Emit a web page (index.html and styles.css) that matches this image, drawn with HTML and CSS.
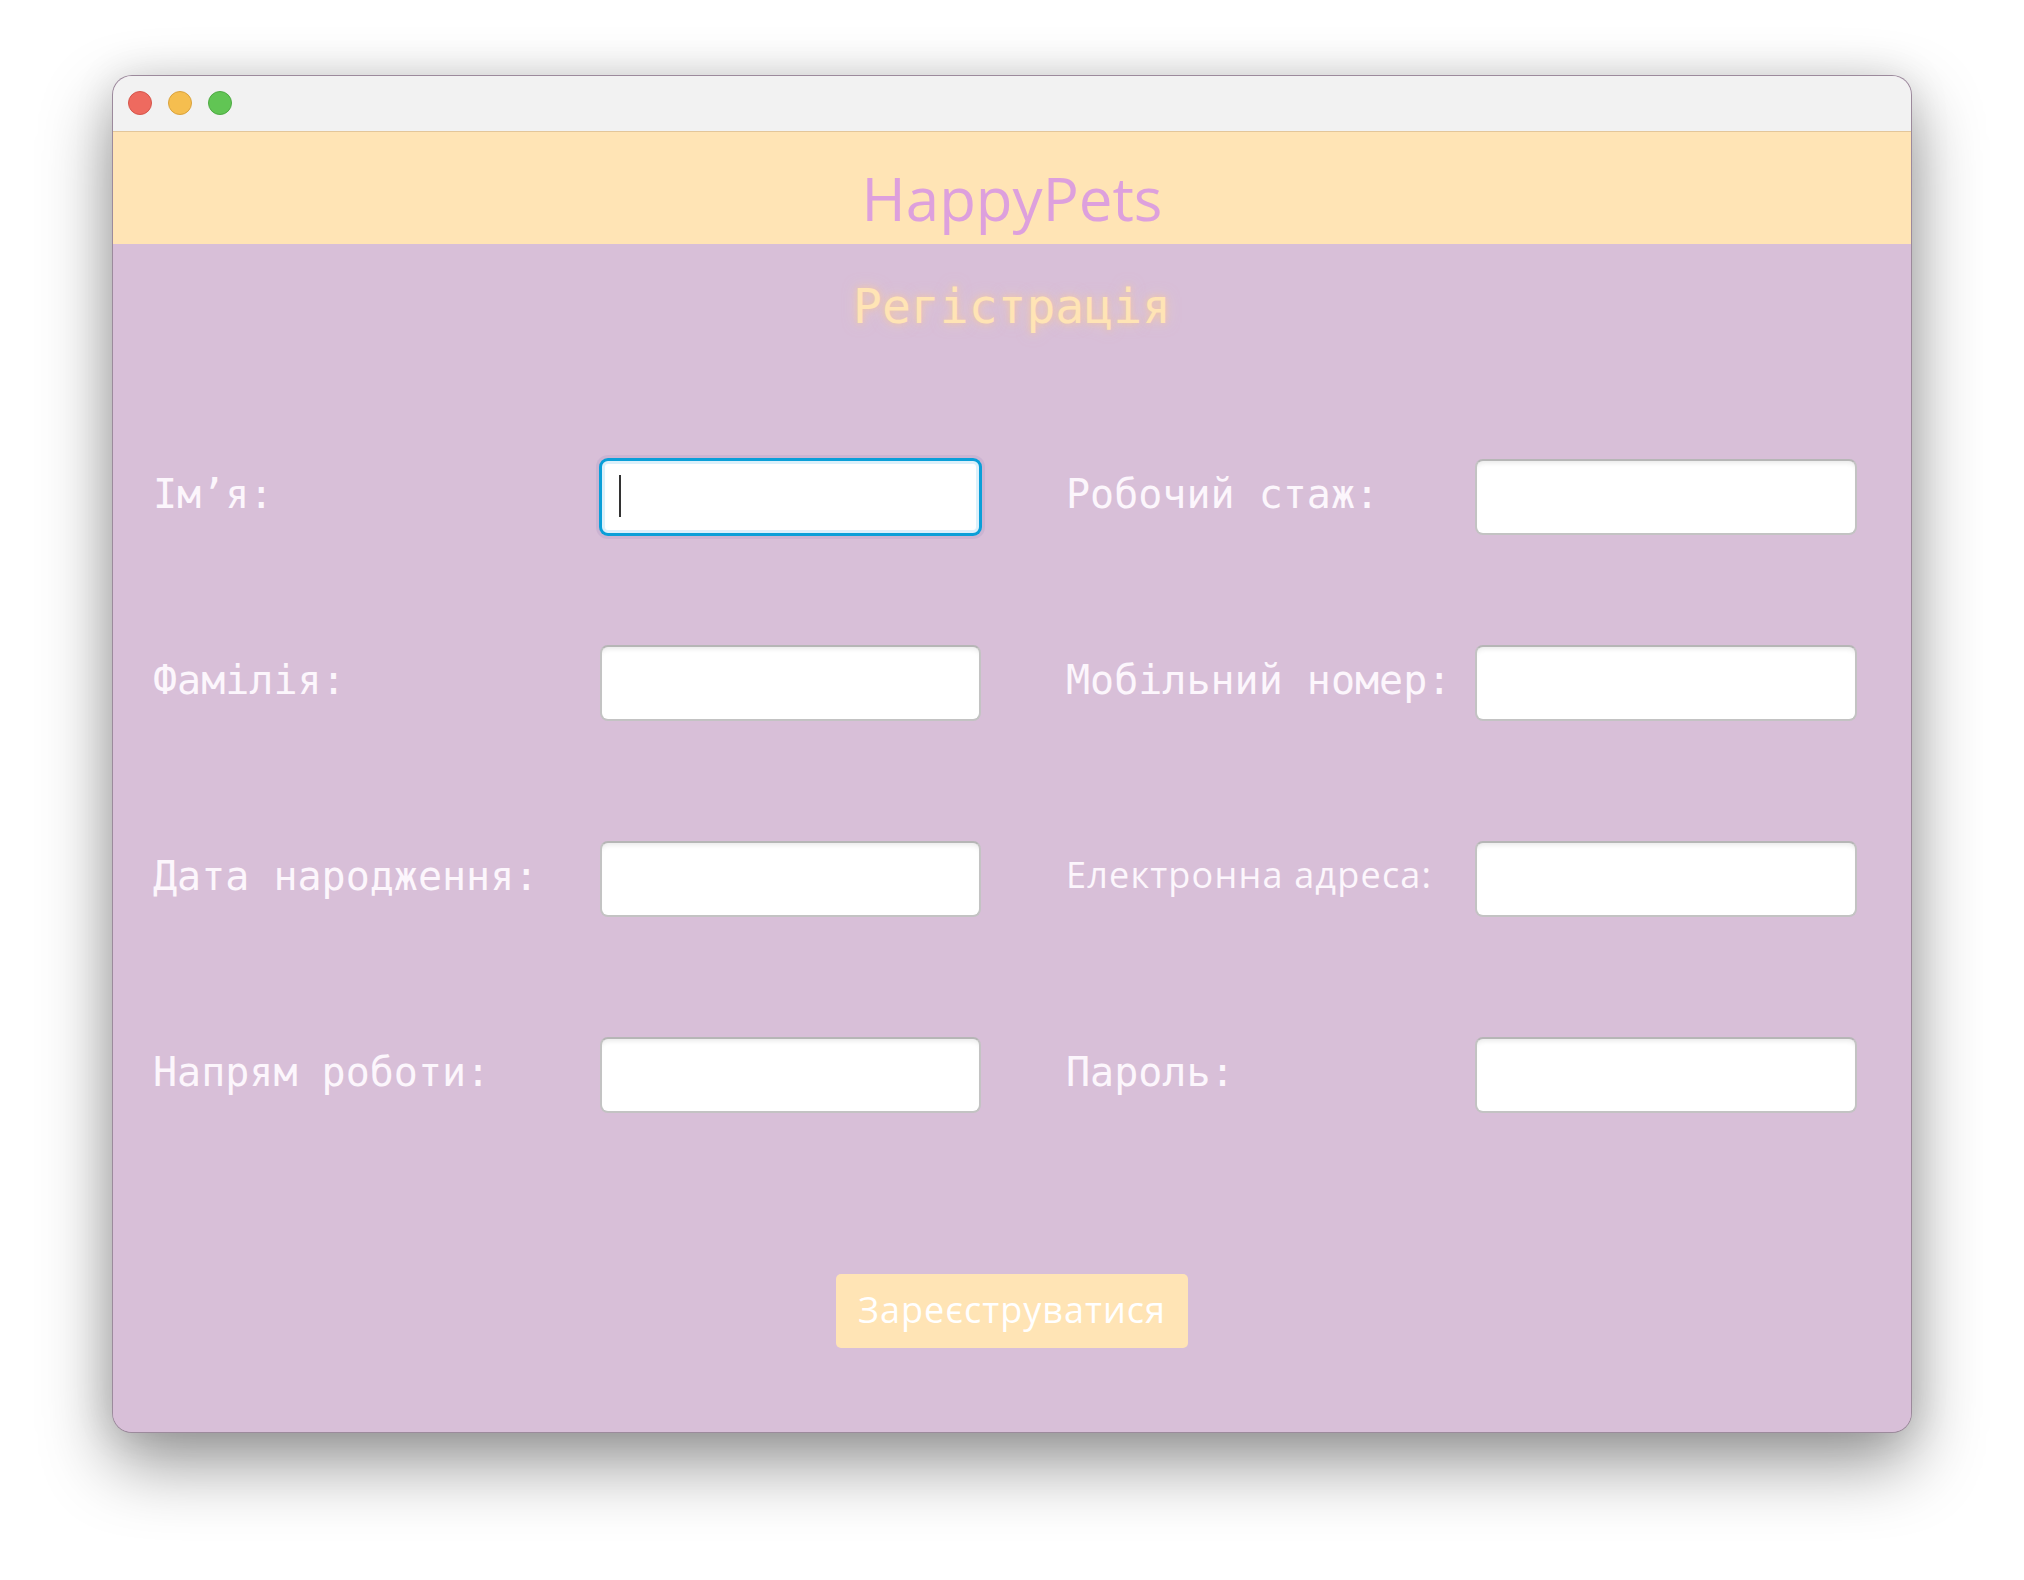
FILE: index.html
```html
<!DOCTYPE html>
<html lang="uk">
<head>
<meta charset="utf-8">
<title>HappyPets</title>
<link rel="stylesheet" href="styles.css">
</head>
<body>
<div class="window">
  <div class="titlebar">
    <span class="light light-red"></span>
    <span class="light light-yellow"></span>
    <span class="light light-green"></span>
  </div>
  <header class="app-header">HappyPets</header>
  <main class="app-body">
    <h1 class="page-title">Регістрація</h1>
    <div class="form">
      <div class="row">
        <label class="label">Ім’я:</label>
        <div class="field-wrap">
          <input class="field is-focused" type="text">
          <span class="caret"></span>
        </div>
        <label class="label label-right">Робочий стаж:</label>
        <input class="field" type="text">
      </div>
      <div class="row row-spaced-a">
        <label class="label">Фамілія:</label>
        <input class="field" type="text">
        <label class="label label-right">Мобільний номер:</label>
        <input class="field" type="text">
      </div>
      <div class="row row-spaced-b">
        <label class="label">Дата народження:</label>
        <input class="field" type="text">
        <label class="label label-right label-sans">Електронна адреса:</label>
        <input class="field" type="text">
      </div>
      <div class="row row-spaced-b">
        <label class="label">Напрям роботи:</label>
        <input class="field" type="text">
        <label class="label label-right">Пароль:</label>
        <input class="field" type="password">
      </div>
    </div>
    <div class="actions">
      <button class="submit" type="button">Зареєструватися</button>
    </div>
  </main>
</div>
</body>
</html>
```
FILE: styles.css
```css
html, body {
  margin: 0;
  padding: 0;
  background: #ffffff;
}

body {
  width: 2024px;
  height: 1580px;
  overflow: hidden;
}

.window {
  width: 1800px;
  margin: 75px auto 0;
  border-radius: 20px;
  overflow: hidden;
  box-sizing: border-box;
  border: 1px solid rgba(0, 0, 0, 0.28);
  box-shadow: 0 30px 70px rgba(0, 0, 0, 0.42), 0 0 40px rgba(0, 0, 0, 0.10);
  background: #d8bfd8;
}

.titlebar {
  height: 56px;
  background: #f2f2f2;
  border-bottom: 1px solid #e3c69a;
  display: flex;
  align-items: center;
  gap: 16px;
  padding-left: 15px;
  padding-bottom: 2px;
  box-sizing: border-box;
}

.light {
  width: 24px;
  height: 24px;
  border-radius: 50%;
  box-sizing: border-box;
}

.light-red { background: #ee6a5f; border: 1px solid #d5554b; }
.light-yellow { background: #f5be4f; border: 1px solid #d9a23d; }
.light-green { background: #61c554; border: 1px solid #4ea943; }

.app-header {
  height: 112px;
  box-sizing: border-box;
  padding-top: 25px;
  background: #ffe4b5;
  color: #dda0dd;
  font-family: "Open Sans", "DejaVu Sans", sans-serif;
  font-size: 60px;
  line-height: 82px;
  text-align: center;
}

.app-body {
  background: #d8bfd8;
  padding: 34px 0 84px;
}

.page-title {
  margin: 0;
  font-family: "DejaVu Sans Mono", "Liberation Mono", monospace;
  font-weight: normal;
  font-size: 48px;
  line-height: 56px;
  text-align: center;
  color: #ffe4b5;
  text-shadow: 0 0 6px rgba(240, 196, 160, 0.95), 0 0 14px rgba(255, 222, 176, 0.55);
}

.form {
  margin-top: 125px;
  padding-left: 40px;
}

.row {
  display: grid;
  grid-template-columns: 447px 381px 494px 382px;
  align-items: center;
  height: 76px;
}

.row-spaced-a { margin-top: 110px; }
.row-spaced-b { margin-top: 120px; }

.label {
  font-family: "DejaVu Sans Mono", "Liberation Mono", monospace;
  font-size: 40px;
  color: #fcf6fc;
  white-space: nowrap;
  padding-bottom: 6px;
}

.label-right {
  padding-left: 85px;
}

.label-sans {
  font-family: "Open Sans", "DejaVu Sans", sans-serif;
  font-size: 36px;
  letter-spacing: 1.2px;
  padding-bottom: 10px;
}

.field-wrap {
  position: relative;
  height: 76px;
}

.field {
  display: block;
  width: 100%;
  height: 76px;
  box-sizing: border-box;
  margin: 0;
  padding: 0 18px;
  border: 2px solid #c3c3c3;
  border-top-color: #b6b6b6;
  border-radius: 8px;
  background: #ffffff;
  box-shadow: inset 0 5px 5px -3px rgba(0, 0, 0, 0.09);
  outline: none;
  font-family: "DejaVu Sans Mono", monospace;
  font-size: 32px;
}

.field.is-focused {
  border: 2px solid #0a9fd8;
  box-shadow: 0 0 0 1px #0a9fd8, inset 0 0 0 3px #dcf0fa, 0 0 0 4px rgba(180, 160, 200, 0.35);
}

.caret {
  position: absolute;
  left: 19px;
  top: 16px;
  width: 2px;
  height: 42px;
  background: #333333;
}

.actions {
  margin-top: 161px;
  display: flex;
  justify-content: center;
}

.submit {
  width: 352px;
  height: 74px;
  border: none;
  border-radius: 5px;
  background: #ffe4b5;
  color: #ffffff;
  font-family: "Open Sans", "DejaVu Sans", sans-serif;
  font-size: 36px;
  letter-spacing: 1px;
  padding: 0 0 4px;
  cursor: pointer;
}
```
